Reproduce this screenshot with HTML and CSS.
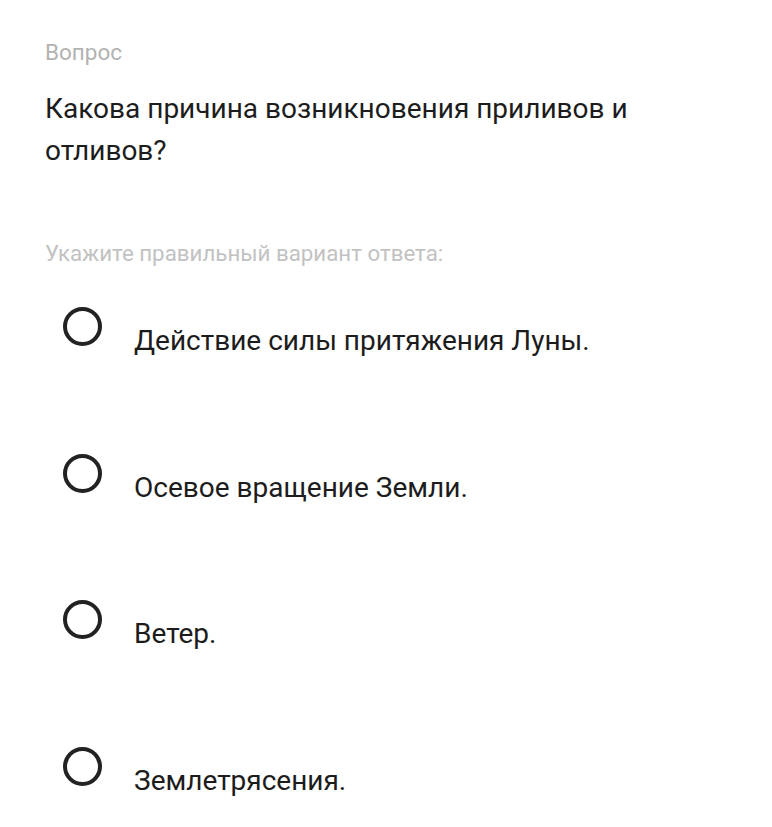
FILE: index.html
```html
<!DOCTYPE html>
<html lang="ru">
<head>
<meta charset="utf-8">
<link rel="stylesheet" href="styles.css">
</head>
<body>
<main class="quiz">
  <div class="label">Вопрос</div>
  <h1 class="question">Какова причина возникновения приливов и отливов?</h1>
  <div class="hint">Укажите правильный вариант ответа:</div>
  <ul class="options">
    <li class="option"><span class="radio"></span><span class="text">Действие силы притяжения Луны.</span></li>
    <li class="option"><span class="radio"></span><span class="text">Осевое вращение Земли.</span></li>
    <li class="option"><span class="radio"></span><span class="text">Ветер.</span></li>
    <li class="option"><span class="radio"></span><span class="text">Землетрясения.</span></li>
  </ul>
</main>
</body>
</html>
```
FILE: styles.css
```css
html, body {
  margin: 0;
  padding: 0;
  background: #ffffff;
}
body {
  font-family: Roboto, "Liberation Sans", sans-serif;
  color: #1c1c1c;
}
.quiz {
  padding: 38px 45px 0 45px;
}
.label {
  font-size: 22.5px;
  line-height: 28px;
  color: #b2b2b2;
}
.question {
  margin: 22px 0 0 0;
  font-size: 28px;
  font-weight: 400;
  line-height: 42px;
  color: #1c1c1c;
  max-width: 620px;
}
.hint {
  margin-top: 67px;
  font-size: 22.3px;
  line-height: 28px;
  color: #c2c2c2;
}
.options {
  list-style: none;
  margin: 40px 0 0 0;
  padding: 0;
  display: flex;
  flex-direction: column;
  gap: 96.67px;
}
.option {
  display: flex;
  align-items: flex-start;
}
.radio {
  box-sizing: border-box;
  width: 39px;
  height: 39px;
  border: 4px solid #222222;
  border-radius: 50%;
  margin-left: 18px;
  flex: none;
}
.text {
  margin-left: 32px;
  margin-top: 18px;
  font-size: 28px;
  line-height: 32px;
}
```
